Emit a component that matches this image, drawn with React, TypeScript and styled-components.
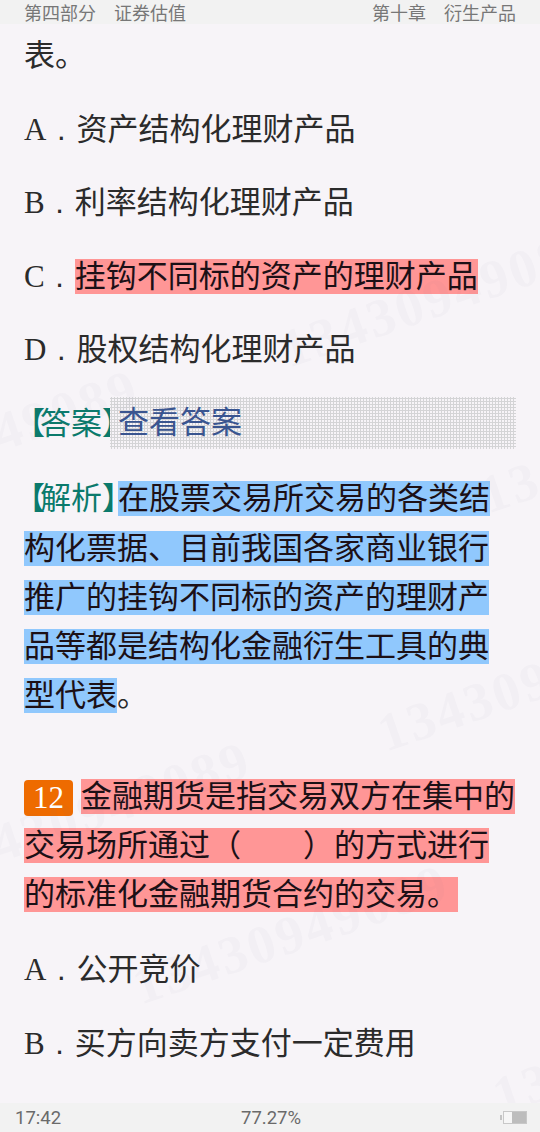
import styled, { createGlobalStyle } from 'styled-components';

const GlobalStyle = createGlobalStyle`
  html,
  body {
    margin: 0;
    padding: 0;
    background: #f7f4f8;
  }
`;

const Page = styled.div`
  position: relative;
  width: 540px;
  height: 1132px;
  display: flex;
  flex-direction: column;
  overflow: hidden;
  background: #f7f4f8;
  font-family: 'Liberation Serif', 'Noto Sans CJK SC', serif;
  color: #2b2b2b;
`;

const TopBar = styled.header`
  position: relative;
  z-index: 1;
  flex: none;
  height: 24px;
  padding: 0 24px;
  display: flex;
  justify-content: space-between;
  align-items: center;
  background: #f2f2f2;
  color: #777;
  font-family: 'Noto Sans CJK SC', sans-serif;
  font-size: 18px;
  line-height: 24px;
  white-space: pre;
`;

const Content = styled.main`
  flex: 1;
  min-height: 0;
  padding: 7px 24px 0;
  overflow: hidden;
  font-size: 31px;
  line-height: 49.2px;
`;

const Para = styled.p<{ $gap?: number }>`
  margin: 0 0 ${(p) => p.$gap ?? 24.3}px;
`;

const OptionDot = styled.span`
  margin: 0 11px 0 10.5px;
  font-family: 'Liberation Sans', sans-serif;
`;

const Mark = styled.span<{ $tone: 'red' | 'blue' }>`
  background: ${(p) => (p.$tone === 'red' ? '#ff9696' : '#90c8fd')};
  color: #1c1016;
`;

const AnswerRow = styled.div`
  height: 49.2px;
  margin-bottom: 26.8px;
  display: flex;
  align-items: center;
`;

const Tag = styled.span`
  flex: none;
  color: #0b7a6c;
  white-space: nowrap;
`;

const OpenBracket = styled.span`
  margin: 0 -5px 0 -10px;
`;

const CloseBracket = styled.span`
  margin-right: -15px;
`;

const AnswerCover = styled.div`
  position: relative;
  flex: 1;
  height: 52px;
  margin-left: -8px;
  padding-left: 8px;
  display: flex;
  align-items: center;
  color: #3a5590;
  background-color: #f7f4f8;
  background-image: radial-gradient(circle, #d4d4d6 1px, transparent 1.3px);
  background-size: 3px 3px;
`;

const NumberBadge = styled.span`
  display: inline-block;
  height: 36px;
  line-height: 36px;
  padding: 0 9px;
  margin-right: 8px;
  border-radius: 4px;
  background: #ee6b00;
  color: #fff;
  vertical-align: -1px;
`;

const BottomBar = styled.footer`
  position: relative;
  z-index: 1;
  flex: none;
  height: 29px;
  padding: 0 13px 0 15px;
  display: grid;
  grid-template-columns: 1fr auto 1fr;
  align-items: center;
  background: #f2f2f2;
  color: #6a6a6a;
  font-family: 'Roboto', sans-serif;
  font-size: 18.5px;
`;

const Percent = styled.span`
  text-align: center;
`;

const Battery = styled.svg`
  justify-self: end;
`;

const Watermark = styled.div<{ $x: number; $y: number }>`
  position: absolute;
  left: ${(p) => p.$x}px;
  top: ${(p) => p.$y}px;
  transform: rotate(-19deg);
  transform-origin: left center;
  font-family: 'Liberation Serif', serif;
  font-weight: 700;
  font-size: 54px;
  letter-spacing: 3px;
  line-height: 1;
  color: rgba(120, 110, 130, 0.035);
  white-space: nowrap;
  pointer-events: none;
`;

const marks = [
  { x: 283, y: 324 },
  { x: -175, y: 466 },
  { x: 482, y: 470 },
  { x: 380, y: 708 },
  { x: -63, y: 838 },
  { x: 135, y: 961 },
  { x: 495, y: 1071 },
];

export default function App() {
  return (
    <Page>
      <GlobalStyle />
      <TopBar>
        <span>第四部分　证券估值</span>
        <span>第十章　衍生产品</span>
      </TopBar>
      <Content>
        <Para>表。</Para>
        <Para>
          A<OptionDot>.</OptionDot>资产结构化理财产品
        </Para>
        <Para>
          B<OptionDot>.</OptionDot>利率结构化理财产品
        </Para>
        <Para>
          C<OptionDot>.</OptionDot>
          <Mark $tone="red">挂钩不同标的资产的理财产品</Mark>
        </Para>
        <Para>
          D<OptionDot>.</OptionDot>股权结构化理财产品
        </Para>
        <AnswerRow>
          <Tag>
            <OpenBracket>【</OpenBracket>答案<CloseBracket>】</CloseBracket>
          </Tag>
          <AnswerCover>查看答案</AnswerCover>
        </AnswerRow>
        <Para $gap={51.5}>
          <Tag>
            <OpenBracket>【</OpenBracket>解析<CloseBracket>】</CloseBracket>
          </Tag>
          <Mark $tone="blue">
            在股票交易所交易的各类结构化票据、目前我国各家商业银行推广的挂钩不同标的资产的理财产品等都是结构化金融衍生工具的典型代表
          </Mark>
          。
        </Para>
        <Para $gap={25.8}>
          <NumberBadge>12</NumberBadge>
          <Mark $tone="red">金融期货是指交易双方在集中的交易场所通过（　　）的方式进行的标准化金融期货合约的交易。</Mark>
        </Para>
        <Para>
          A<OptionDot>.</OptionDot>公开竞价
        </Para>
        <Para>
          B<OptionDot>.</OptionDot>买方向卖方支付一定费用
        </Para>
      </Content>
      <BottomBar>
        <span>17:42</span>
        <Percent>77.27%</Percent>
        <Battery width="27" height="13" viewBox="0 0 27 13">
          <rect x="0" y="4" width="2" height="5" fill="#c4c4c4" />
          <rect x="3.5" y="0.5" width="23" height="12" fill="#f6f6f6" stroke="#c8c8c8" />
          <rect x="12" y="1" width="14" height="11" fill="#bdbdbd" />
        </Battery>
      </BottomBar>
      {marks.map((m) => (
        <Watermark key={`${m.x}-${m.y}`} $x={m.x} $y={m.y}>
          13430949089
        </Watermark>
      ))}
    </Page>
  );
}
